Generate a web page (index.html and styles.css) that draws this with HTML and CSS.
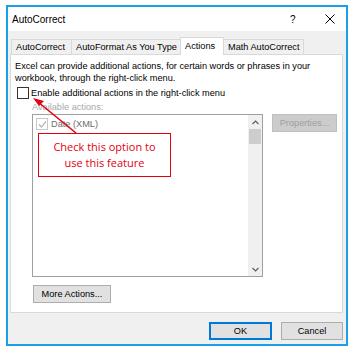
FILE: index.html
```html
<!DOCTYPE html>
<html>
<head>
<meta charset="utf-8">
<link rel="stylesheet" href="styles.css">
</head>
<body>
<div class="window">
  <div class="titlebar">
    <span class="title">AutoCorrect</span>
    <span class="help">?</span>
    <span class="close"><svg width="10" height="10" viewBox="0 0 10 10"><path d="M0.5 0.5 L9.5 9.5 M9.5 0.5 L0.5 9.5" stroke="#000" stroke-width="1" fill="none"/></svg></span>
  </div>
  <div class="client">
    <div class="tabs">
      <div class="tab">AutoCorrect</div>
      <div class="tab">AutoFormat As You Type</div>
      <div class="tab active">Actions</div>
      <div class="tab">Math AutoCorrect</div>
    </div>
    <div class="panel">
      <p class="desc">Excel can provide additional actions, for certain words or phrases in your<br>workbook, through the right-click menu.</p>
      <div class="enable"><span class="cb"></span><span>Enable additional actions in the right-click menu</span></div>
      <div class="avail">Available actions:</div>
      <div class="list-row">
        <div class="listbox">
          <div class="items">
            <div class="item"><span class="cb checked"><svg width="9" height="9" viewBox="0 0 9 9"><path d="M1 4.5 L3.5 7 L8 1.5" stroke="#b5b5b5" stroke-width="1.2" fill="none"/></svg></span><span>Date (XML)</span></div>
          </div>
          <div class="scrollbar">
            <span class="arrow-btn"><svg width="7" height="5" viewBox="0 0 7 5"><path d="M0.5 4 L3.5 1 L6.5 4" stroke="#606060" stroke-width="1.2" fill="none"/></svg></span>
            <span class="thumb"></span>
            <span class="track"></span>
            <span class="arrow-btn"><svg width="7" height="5" viewBox="0 0 7 5"><path d="M0.5 1 L3.5 4 L6.5 1" stroke="#606060" stroke-width="1.2" fill="none"/></svg></span>
          </div>
        </div>
        <button class="btn disabled">Properties...</button>
      </div>
      <button class="btn more">More Actions...</button>
    </div>
    <div class="footer">
      <button class="btn default">OK</button>
      <button class="btn cancel">Cancel</button>
    </div>
  </div>
  <div class="callout">Check this option to<br>use this feature</div>
  <svg class="pointer" width="60" height="50" viewBox="0 0 60 50">
    <line x1="47" y1="42" x2="9" y2="11" stroke="#e4000f" stroke-width="1.6"/>
    <path d="M4 7 L15 10 L10 15 Z" fill="#e4000f"/>
  </svg>
</div>
</body>
</html>
```
FILE: styles.css
```css
* { box-sizing: border-box; }
body {
  margin: 0;
  background: #fff;
  font-family: "Liberation Sans", Arial, sans-serif;
  font-size: 9.2px;
  color: #000;
}
.window {
  position: relative;
  margin: 5px 0 0 6px;
  width: 342px;
  height: 341px;
  border: 2px solid #1aa0e6;
  background: #f0f0f0;
  display: flex;
  flex-direction: column;
}
.titlebar {
  height: 24px;
  background: #fff;
  display: flex;
  align-items: center;
  padding-left: 4px;
  flex: none;
}
.title { font-size: 10px; flex: 1; }
.help { font-size: 10px; width: 6px; margin-right: 29px; }
.close { width: 10px; margin-right: 11px; display: flex; }
.client {
  flex: 1;
  display: flex;
  flex-direction: column;
  padding: 6px 3px 0 2px;
}
.tabs {
  display: flex;
  align-items: flex-end;
  height: 17px;
  padding-left: 1px;
  position: relative;
  z-index: 1;
}
.tab {
  height: 15px;
  padding: 0 4px;
  border: 1px solid #d9d9d9;
  border-bottom: none;
  margin-right: -1px;
  background: #f0f0f0;
  display: flex;
  align-items: center;
  white-space: nowrap;
}
.tab:nth-child(1) { width: 61px; }
.tab:nth-child(2) { width: 111px; }
.tab.active {
  height: 18px;
  width: 44px;
  background: #fff;
  margin: 0 -1px 0 -1px;
  padding-bottom: 2px;
  position: relative;
  top: 1px;
  border-color: #d9d9d9;
}
.tab:nth-child(4) { width: 81px; }
.panel {
  height: 259px;
  background: #fff;
  border: 1px solid #d9d9d9;
  padding: 5px 0 0 4px;
  display: flex;
  flex-direction: column;
  flex: none;
}
.desc { margin: 0; line-height: 12px; }
.enable {
  display: flex;
  align-items: center;
  margin-top: 2px;
  margin-left: 2px;
  height: 13px;
}
.cb {
  width: 12px;
  height: 12px;
  border: 1px solid #333;
  background: #fff;
  margin-right: 2px;
  display: flex;
  align-items: center;
  justify-content: center;
  flex: none;
}
.avail {
  color: #a9a9a9;
  margin: 2px 0 0 17px;
  line-height: 12px;
}
.list-row {
  display: flex;
  margin-left: 17px;
  margin-top: 1px;
  align-items: flex-start;
}
.listbox {
  width: 231px;
  height: 163px;
  border: 1px solid #a0a0a0;
  background: #fff;
  display: flex;
  flex: none;
}
.items { flex: 1; padding: 2px 0 0 3px; }
.item { display: flex; align-items: center; color: #6d6d6d; height: 14px; }
.cb.checked { border-color: #c8c8c8; margin-right: 3px; }
.scrollbar {
  width: 14px;
  background: #f0f0f0;
  display: flex;
  flex-direction: column;
}
.arrow-btn {
  height: 14px;
  display: flex;
  align-items: center;
  justify-content: center;
  flex: none;
}
.thumb { height: 15px; background: #cdcdcd; flex: none; margin: 0 1px; }
.track { flex: 1; }
.btn {
  font-family: "Liberation Sans", Arial, sans-serif;
  font-size: 9.2px;
  height: 18px;
  border: 1px solid #adadad;
  background: #e1e1e1;
  color: #000;
  padding: 0;
}
.btn.disabled {
  color: #a0a0a0;
  background: #cccccc;
  border-color: #bfbfbf;
  width: 65px;
  margin-left: 9px;
  flex: none;
}
.btn.more {
  width: 78px;
  margin: 8px 0 0 18px;
  align-self: flex-start;
}
.footer {
  display: flex;
  justify-content: flex-end;
  gap: 9px;
  padding: 9px 0 0 0;
}
.btn.default {
  width: 63px;
  border: 1px solid #0078d7;
  box-shadow: inset 0 0 0 1px #0078d7;
}
.btn.cancel { width: 62px; }
.callout {
  position: absolute;
  left: 30px;
  top: 126px;
  width: 133px;
  height: 44px;
  border: 1px solid #e4000f;
  background: #fff;
  color: #e4000f;
  font-family: "Open Sans", sans-serif;
  font-size: 11px;
  line-height: 16px;
  display: flex;
  align-items: center;
  justify-content: center;
  text-align: center;
}
.pointer {
  position: absolute;
  left: 21px;
  top: 84px;
}
```
